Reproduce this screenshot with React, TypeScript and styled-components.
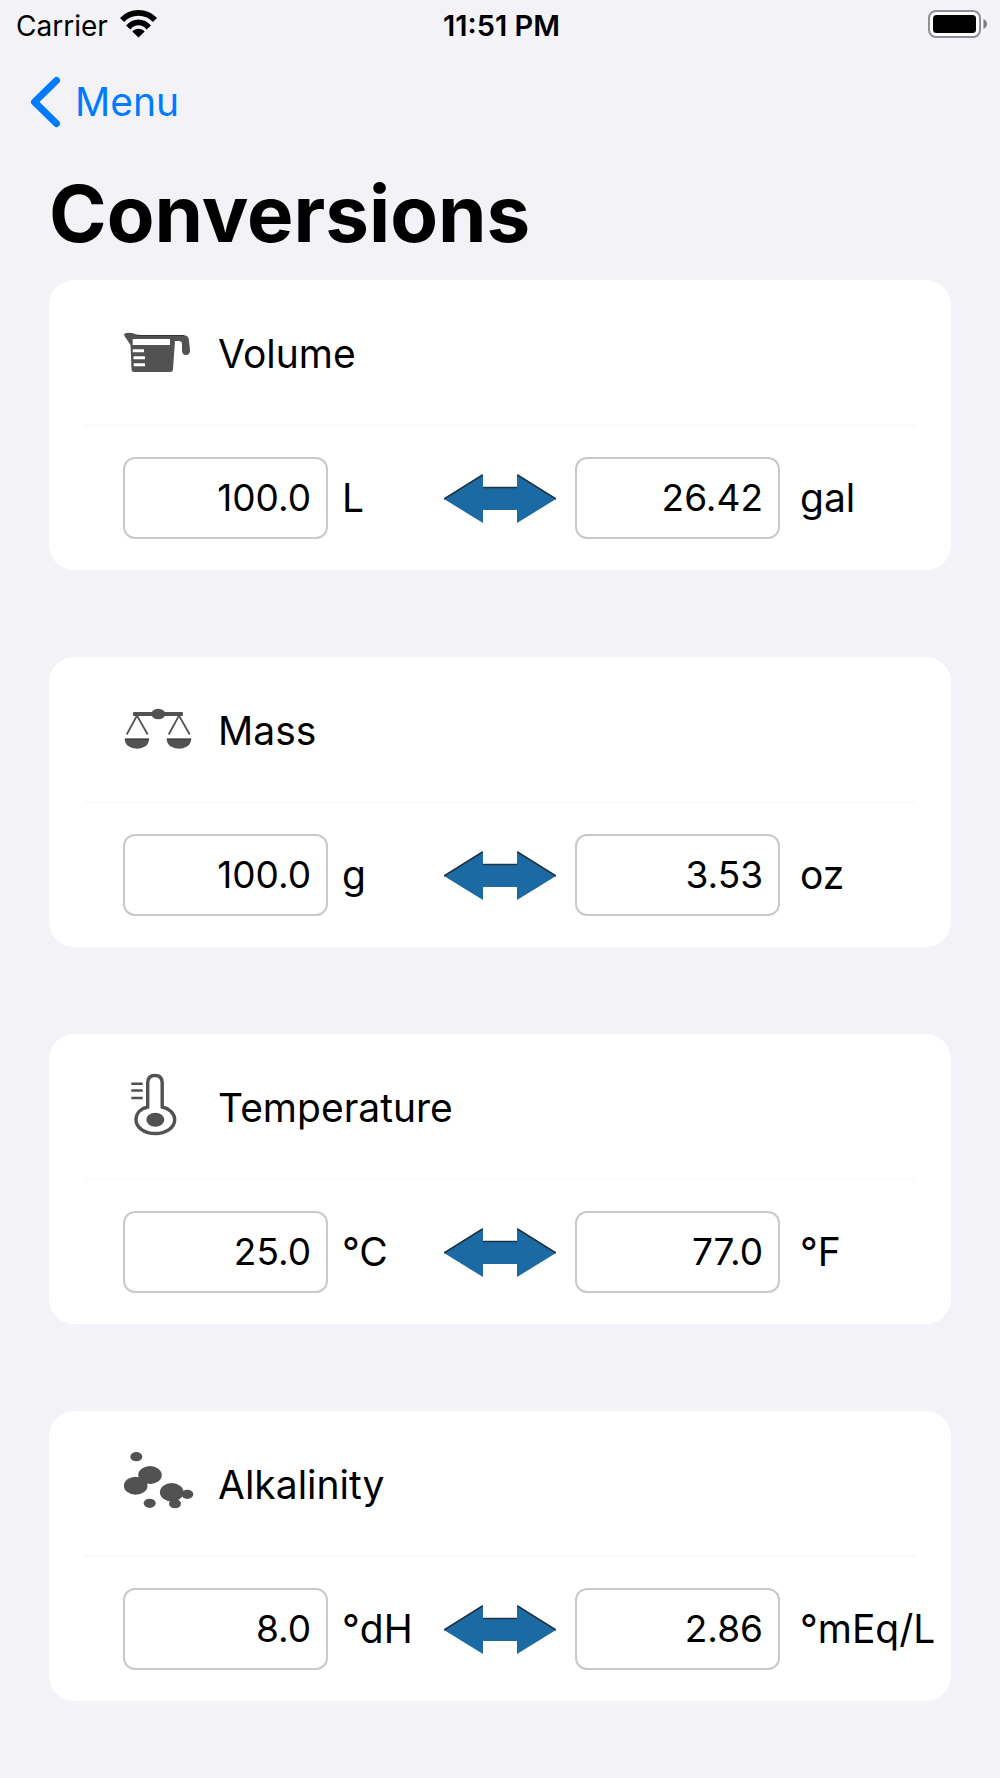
import React, { useId, useState } from "react";
import styled, { createGlobalStyle } from "styled-components";

const GlobalStyle = createGlobalStyle`
  *, *::before, *::after { box-sizing: border-box; }
  body {
    margin: 0;
    background: #f2f2f7;
    color: #000;
    font-family: Inter, "Liberation Sans", sans-serif;
  }
`;

const Screen = styled.div`
  min-height: 100vh;
  padding-bottom: 78px;
`;

const StatusBar = styled.header`
  display: grid;
  grid-template-columns: 1fr auto 1fr;
  align-items: center;
  height: 48px;
  padding: 0 13px 0 16px;
  font-size: 28px;
  line-height: 32px;
`;

const Carrier = styled.div`
  display: flex;
  align-items: center;
  gap: 12px;
`;

const CarrierName = styled.span`
  padding-top: 3px;
`;

const Clock = styled.time`
  padding-top: 3px;
  font-size: 29px;
  font-weight: 600;
`;

const BatteryIcon = styled.svg`
  justify-self: end;
`;

const NavBar = styled.nav`
  display: flex;
  align-items: center;
  height: 108px;
  padding: 0 30px;
`;

const BackLink = styled.a`
  display: flex;
  align-items: center;
  gap: 14px;
  color: #007aff;
  font-size: 39px;
  line-height: 48px;
  text-decoration: none;
`;

const Title = styled.h1`
  margin: 0;
  padding: 10px 49px 18px;
  font-size: 78px;
  line-height: 96px;
  font-weight: 700;
`;

const CardList = styled.main`
  display: flex;
  flex-direction: column;
  gap: 87px;
  padding: 0 49px;
`;

const Card = styled.section`
  border-radius: 25px;
  background: #fff;
`;

const CardHeader = styled.div`
  display: flex;
  align-items: center;
  gap: 23px;
  height: 144px;
  margin: 0 36px;
  padding: 2px 0 0 38px;
`;

const CardTitle = styled.h2`
  margin: 0;
  padding-top: 2px;
  font-size: 39px;
  line-height: 48px;
  font-weight: 400;
`;

const Separator = styled.hr`
  height: 2px;
  margin: 0 36px;
  border: 0;
  background: #f9f9f9;
`;

const ConversionRow = styled.div`
  display: grid;
  grid-template-columns: 219px minmax(102px, 1fr) 131px 225px 134px;
  align-items: center;
  padding: 31px 17px 31px 74px;
`;

const ValueInput = styled.input`
  width: 205px;
  height: 82px;
  padding: 0 15px 2px;
  border: 2px solid #c9c9c9;
  border-radius: 12px;
  background: #fff;
  color: #000;
  font: inherit;
  font-size: 37px;
  line-height: 48px;
  text-align: right;
`;

const Unit = styled.label`
  font-size: 39px;
  line-height: 48px;
  white-space: nowrap;
`;

const GlyphSvg = styled.svg`
  flex: none;
  color: #525252;
`;

function JugIcon() {
  return (
    <GlyphSvg width="72" height="72" viewBox="0 0 72 72" fill="currentColor" aria-hidden="true">
      <path
        fillRule="evenodd"
        d="M1 17Q4 15 9 16Q14 18 18 18H60Q66 18 66 24L67 33Q67 38 63 38Q59 38 59 33V27Q59 24 56 24H52L50 52Q50 55 47 55H11Q8.500 55 8.500 52L7.500 28L1.500 19ZM9.700 22V28H47V22ZM9.700 32.300V35.300H21V32.300ZM10.500 39.300V42.200H22V39.300ZM10.700 46.300V49.300H22V46.300Z"
      />
      <path d="M14 18.500H61" stroke="#333" strokeWidth="1" />
    </GlyphSvg>
  );
}

function ScaleIcon() {
  return (
    <GlyphSvg width="72" height="72" viewBox="0 0 72 72" fill="currentColor" aria-hidden="true">
      <rect x="10" y="18" width="50" height="4" rx="1" />
      <ellipse cx="35.300" cy="20" rx="7" ry="5.300" />
      <path d="M3.700 40.500L14 21.500L24.700 40.500M45.700 40.500L56 21.500L66.700 40.500" fill="none" stroke="currentColor" strokeWidth="1.800" />
      <path d="M1.700 44.700H26Q26 50 22 52.500Q18 54.700 14 54.700Q9 54.700 5 52Q1.700 49 1.700 44.700ZM43.700 44.700H68.300Q68 50 64 52.500Q60 54.700 56 54.700Q51 54.700 47 52Q43.700 49 43.700 44.700Z" />
      <path d="M2 45H26M44 45H68" stroke="#333" strokeWidth="1" />
    </GlyphSvg>
  );
}

function ThermometerIcon() {
  return (
    <GlyphSvg width="72" height="72" viewBox="0 0 72 72" fill="none" stroke="currentColor" aria-hidden="true">
      <path
        d="M24.700 36V12Q24.700 4.500 32 4.500Q39.200 4.500 39.200 12V36C46 37.500 51.700 42 51.700 48.700C51.700 56.500 43 62.500 32.300 62.500C21.500 62.500 13 56.500 13 48.700C13 42 18 37.500 24.700 36Z"
        strokeWidth="3.400"
      />
      <path d="M8.300 12.700H19.700M8.300 19.500H19.700M8.300 27H19.700" strokeWidth="2.400" />
      <ellipse cx="32.300" cy="48.700" rx="9" ry="7" fill="currentColor" stroke="none" />
    </GlyphSvg>
  );
}

function MoleculesIcon() {
  return (
    <GlyphSvg width="72" height="72" viewBox="0 0 72 72" fill="currentColor" aria-hidden="true">
      <ellipse cx="13.300" cy="8.700" rx="6" ry="4.600" />
      <ellipse cx="27" cy="27" rx="11.800" ry="9" />
      <ellipse cx="12.700" cy="37.700" rx="11.800" ry="9" />
      <ellipse cx="48.700" cy="44.300" rx="11.800" ry="9.200" />
      <ellipse cx="64.300" cy="46.300" rx="6" ry="4.600" />
      <ellipse cx="26.700" cy="55.300" rx="6" ry="4.600" />
      <ellipse cx="52" cy="55.700" rx="6" ry="4.600" />
    </GlyphSvg>
  );
}

function SwapArrow() {
  return (
    <svg width="112" height="52" viewBox="0 -2 112 52" aria-hidden="true">
      <path d="M0 25L39 0V13H73V0L112 25L73 49V36H39V49Z" fill="#1c6aa3" />
      <path d="M0 25L38.500 1M39 13.500H73M73.500 1L112 25" fill="none" stroke="#1f3544" strokeWidth="1.600" />
    </svg>
  );
}

type Side = {
  unit: string;
  name: string;
  digits: number;
};

type Conversion = {
  title: string;
  icon: React.ReactNode;
  from: Side;
  to: Side;
  initial: number;
  convert: (value: number) => number;
  invert: (value: number) => number;
};

const conversions: Conversion[] = [
  {
    title: "Volume",
    icon: <JugIcon />,
    from: { unit: "L", name: "liters", digits: 1 },
    to: { unit: "gal", name: "gallons", digits: 2 },
    initial: 100,
    convert: (v) => v * 0.264172,
    invert: (v) => v / 0.264172,
  },
  {
    title: "Mass",
    icon: <ScaleIcon />,
    from: { unit: "g", name: "grams", digits: 1 },
    to: { unit: "oz", name: "ounces", digits: 2 },
    initial: 100,
    convert: (v) => v * 0.035274,
    invert: (v) => v / 0.035274,
  },
  {
    title: "Temperature",
    icon: <ThermometerIcon />,
    from: { unit: "°C", name: "celsius", digits: 1 },
    to: { unit: "°F", name: "fahrenheit", digits: 1 },
    initial: 25,
    convert: (v) => v * 1.8 + 32,
    invert: (v) => (v - 32) / 1.8,
  },
  {
    title: "Alkalinity",
    icon: <MoleculesIcon />,
    from: { unit: "°dH", name: "dh", digits: 1 },
    to: { unit: "°mEq/L", name: "meq", digits: 2 },
    initial: 8,
    convert: (v) => v / 2.8,
    invert: (v) => v * 2.8,
  },
];

function format(value: number, digits: number) {
  return Number.isFinite(value) ? value.toFixed(digits) : "";
}

function ConversionCard({ title, icon, from, to, initial, convert, invert }: Conversion) {
  const id = useId();
  const [left, setLeft] = useState(format(initial, from.digits));
  const [right, setRight] = useState(format(convert(initial), to.digits));

  const changeLeft = (text: string) => {
    setLeft(text);
    setRight(format(convert(parseFloat(text)), to.digits));
  };
  const changeRight = (text: string) => {
    setRight(text);
    setLeft(format(invert(parseFloat(text)), from.digits));
  };

  return (
    <Card>
      <CardHeader>
        {icon}
        <CardTitle>{title}</CardTitle>
      </CardHeader>
      <Separator />
      <ConversionRow>
        <ValueInput
          id={id + from.name}
          inputMode="decimal"
          value={left}
          onChange={(e) => changeLeft(e.target.value)}
        />
        <Unit htmlFor={id + from.name}>{from.unit}</Unit>
        <SwapArrow />
        <ValueInput
          id={id + to.name}
          inputMode="decimal"
          value={right}
          onChange={(e) => changeRight(e.target.value)}
        />
        <Unit htmlFor={id + to.name}>{to.unit}</Unit>
      </ConversionRow>
    </Card>
  );
}

export default function App() {
  return (
    <Screen>
      <GlobalStyle />
      <StatusBar>
        <Carrier>
          <CarrierName>Carrier</CarrierName>
          <svg width="37" height="28" viewBox="0 0 37 28" fill="none" aria-hidden="true">
            <path d="M2 10C11 0.600 26 0.600 35 10" stroke="#000" strokeWidth="5.800" />
            <path d="M8.200 17.500C14 10.700 23 10.700 28.800 17.500" stroke="#000" strokeWidth="5.800" />
            <path d="M12.300 21.500C15.500 17.800 21.500 17.800 24.700 21.500L18.500 27.500Z" fill="#000" />
          </svg>
        </Carrier>
        <Clock>11:51 PM</Clock>
        <BatteryIcon width="59" height="28" viewBox="0 0 59 28" fill="none" aria-hidden="true">
          <rect x="1" y="1" width="51" height="26" rx="7" fill="#fff" stroke="#8e8e93" strokeWidth="2" />
          <rect x="5" y="5" width="43" height="18" rx="3.500" fill="#000" />
          <path d="M55.500 9Q59 11 59 14Q59 17 55.500 19Z" fill="#7c7c80" />
        </BatteryIcon>
      </StatusBar>
      <NavBar>
        <BackLink href="#menu">
          <svg width="31" height="52" viewBox="0 0 31 52" fill="none" aria-hidden="true">
            <path d="M26.500 4.500L4.500 26L26.500 47.500" stroke="#007aff" strokeWidth="7" strokeLinecap="round" strokeLinejoin="round" />
          </svg>
          Menu
        </BackLink>
      </NavBar>
      <Title>Conversions</Title>
      <CardList>
        {conversions.map((item) => (
          <ConversionCard key={item.title} {...item} />
        ))}
      </CardList>
    </Screen>
  );
}
